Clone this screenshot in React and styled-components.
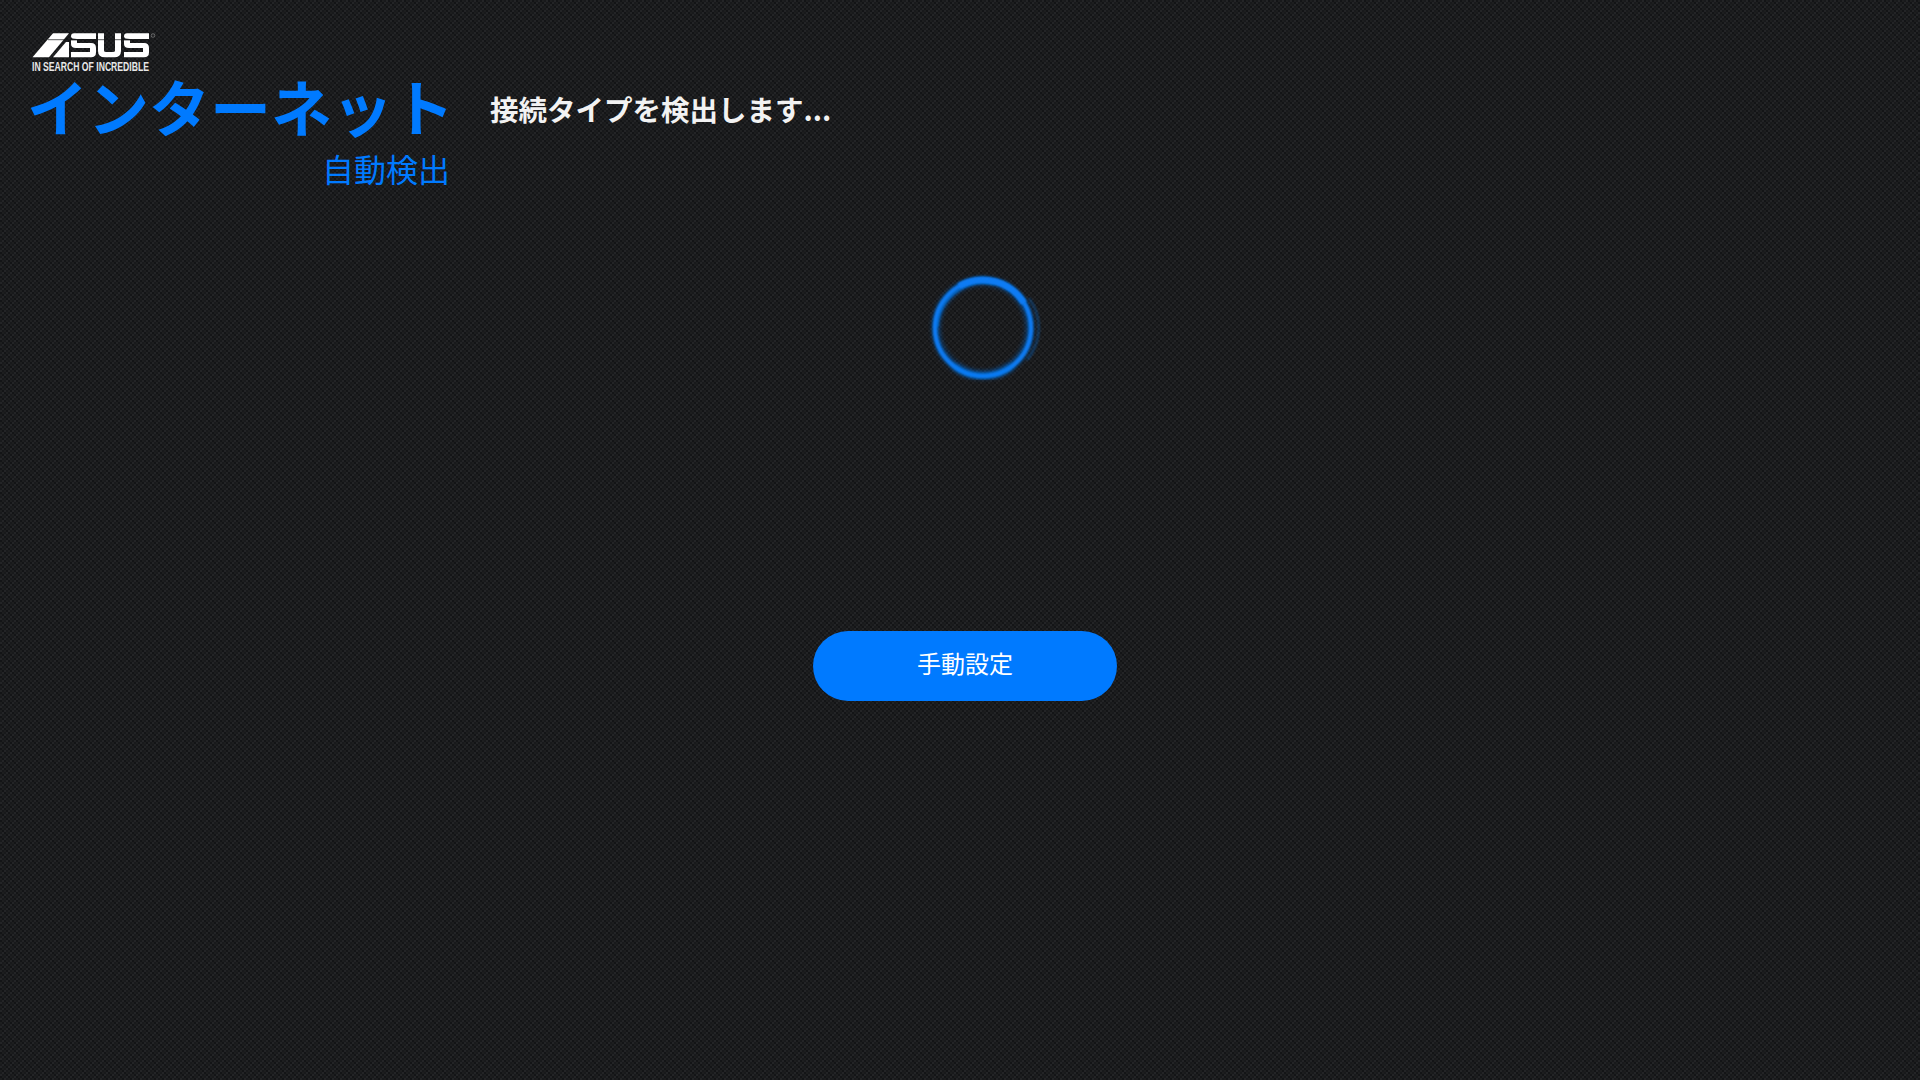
import React from "react";
import styled, { createGlobalStyle } from "styled-components";

const Global = createGlobalStyle`
  html, body { margin: 0; padding: 0; height: 100%; }
  body {
    background-color: #17181a;
    background-image:
      repeating-conic-gradient(rgba(0,0,0,0.1) 0 25%, rgba(255,255,255,0.012) 0 50%),
      repeating-conic-gradient(#202123 0 25%, #151618 0 50%);
    background-size: 8px 8px, 4px 4px;
    font-family: "Liberation Sans", "Noto Sans CJK JP", sans-serif;
  }
`;
const Page = styled.main`
  box-sizing: border-box; height: 1080px; overflow: hidden;
  padding: 33px 0 0 27px;
  display: flex; flex-direction: column;
`;
const LogoWrap = styled.div`
  width: 127px; height: 38px; margin-left: 5px; flex: none;
  svg { display: block; overflow: visible; }
`;
const Head = styled.header`
  display: flex; align-items: flex-start;
`;
const Titles = styled.div`
  display: flex; flex-direction: column; align-items: flex-end;
`;
const Title = styled.h1`
  margin: 0; color: #007aff; font-family: "Noto Sans CJK JP", sans-serif;
  font-size: 61px; font-weight: 700; line-height: 70px; white-space: nowrap;
`;
const Sub = styled.div`
  color: #007aff; font-family: "Noto Sans CJK JP", sans-serif;
  font-size: 32px; line-height: 44px; margin: 5px 4px 0 0;
`;
const Message = styled.div`
  color: #f2f2f2; font-family: "Noto Sans CJK JP", sans-serif;
  font-size: 28.5px; font-weight: 700; line-height: 40px;
  margin: 18px 0 0 36px; white-space: nowrap;
`;
const SpinnerRow = styled.div`
  display: flex; justify-content: center; margin-top: 78px; padding-left: 21px;
  svg { display: block; }
`;
const ButtonRow = styled.div`
  display: flex; justify-content: center; margin-top: 243px; padding-right: 17px;
`;
const Button = styled.button`
  width: 304px; height: 70px; border: 0; border-radius: 35px;
  background: #007aff; color: #fff; cursor: pointer;
  font-family: "Noto Sans CJK JP", sans-serif; font-size: 24px; line-height: 1; padding: 0 0 6px;
`;

const sPath = (x) =>
  `M${x + 3} 0.3 H${x + 25} V6 H${x + 6} Q${x} 6 ${x} 3.5 Q${x} 0.3 ${x + 3} 0.3 Z ` +
  `M${x} 7.2 H${x + 6} V10 H${x + 20} Q${x + 25} 10 ${x + 25} 15 V19.5 Q${x + 25} 24.3 ${x + 20} 24.3 H${x} V19 H${x + 19} V15 H${x + 5} Q${x} 15 ${x} 11 Z`;

const Logo = () => (
  <svg width="127" height="38" viewBox="0 0 127 38">
    <g fill="#fff">
      <path d="M0.5 24.3 L21 0.3 L37 0.3 L17 24.3 Z" />
      <path d="M21 24.3 L34 9 L37 9 L37 24.3 Z" />
      <path d={sPath(39)} />
      <path d="M66 0.3 H72 V17.5 Q72 19 74 19 H81 Q83 19 83 17.5 V0.3 H89 V18 Q89 24.3 82 24.3 H73 Q66 24.3 66 18 Z" />
      <path d={sPath(92)} />
    </g>
    <rect x="16" y="6.2" width="101" height="1" fill="#17181a" opacity="0.7" />
    <circle cx="121" cy="2.5" r="1.8" fill="none" stroke="#999" strokeWidth="0.6" />
    <text x="0" y="38" fill="#e8e8e8" fontFamily="'Liberation Sans', sans-serif" fontWeight="700" fontSize="13" textLength="117" lengthAdjust="spacingAndGlyphs">IN SEARCH OF INCREDIBLE</text>
  </svg>
);

const Spinner = () => (
  <svg width="120" height="120" viewBox="0 0 120 120" fill="none">
    <defs>
      <filter id="b1" x="-30%" y="-30%" width="160%" height="160%"><feGaussianBlur stdDeviation="2.5" /></filter>
      <filter id="b2" x="-30%" y="-30%" width="160%" height="160%"><feGaussianBlur stdDeviation="1" /></filter>
    </defs>
    <circle cx="59" cy="60" r="47" stroke="#0a5fc4" strokeOpacity="0.6" strokeWidth="7" filter="url(#b1)" />
    <circle cx="59" cy="60" r="48" stroke="#0a7cf4" strokeWidth="4.5" filter="url(#b2)" />
    <path d="M12 56 A47 47 0 0 1 70 13" stroke="#0a7cf4" strokeOpacity="0.55" strokeWidth="3" transform="translate(1,3)" filter="url(#b2)" />
    <path d="M35 18 A48.5 48.5 0 0 1 100 35" stroke="#0a7cf4" strokeWidth="6.5" filter="url(#b2)" />
    <path d="M100 30 A50 50 0 0 1 98 92" stroke="#0a7cf4" strokeOpacity="0.4" strokeWidth="2" transform="translate(5,0)" filter="url(#b2)" />
    <path d="M30 98 A47 47 0 0 0 88 98" stroke="#0a7cf4" strokeOpacity="0.6" strokeWidth="5" filter="url(#b1)" />
  </svg>
);

export default function App() {
  return (
    <Page>
      <Global />
      <LogoWrap><Logo /></LogoWrap>
      <Head>
        <Titles>
          <Title>インターネット</Title>
          <Sub>自動検出</Sub>
        </Titles>
        <Message>接続タイプを検出します...</Message>
      </Head>
      <SpinnerRow><Spinner /></SpinnerRow>
      <ButtonRow><Button>手動設定</Button></ButtonRow>
    </Page>
  );
}
